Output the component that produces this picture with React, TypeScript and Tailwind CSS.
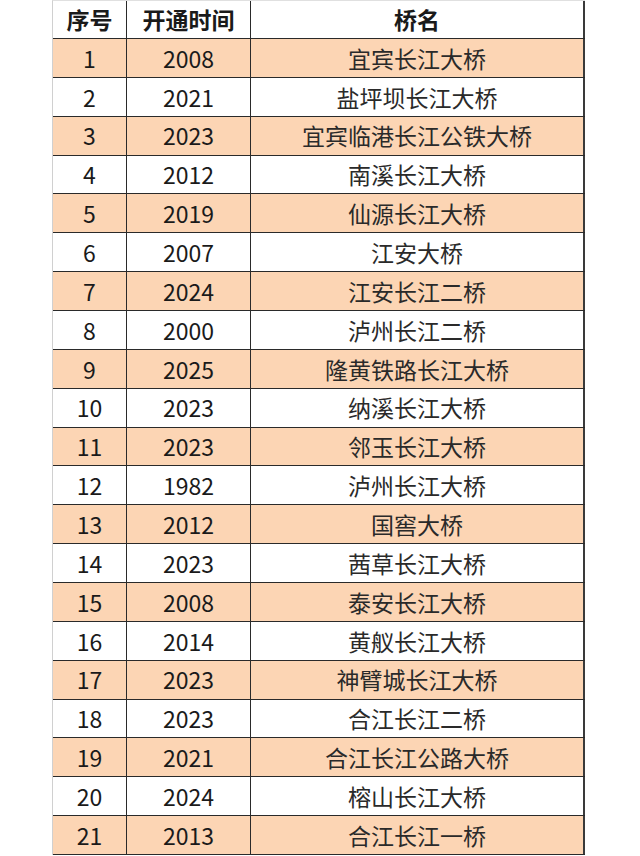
import React from "react";

const rows: [string, string, string][] = [
  ["1", "2008", "宜宾长江大桥"],
  ["2", "2021", "盐坪坝长江大桥"],
  ["3", "2023", "宜宾临港长江公铁大桥"],
  ["4", "2012", "南溪长江大桥"],
  ["5", "2019", "仙源长江大桥"],
  ["6", "2007", "江安大桥"],
  ["7", "2024", "江安长江二桥"],
  ["8", "2000", "泸州长江二桥"],
  ["9", "2025", "隆黄铁路长江大桥"],
  ["10", "2023", "纳溪长江大桥"],
  ["11", "2023", "邻玉长江大桥"],
  ["12", "1982", "泸州长江大桥"],
  ["13", "2012", "国窖大桥"],
  ["14", "2023", "茜草长江大桥"],
  ["15", "2008", "泰安长江大桥"],
  ["16", "2014", "黄舣长江大桥"],
  ["17", "2023", "神臂城长江大桥"],
  ["18", "2023", "合江长江二桥"],
  ["19", "2021", "合江长江公路大桥"],
  ["20", "2024", "榕山长江大桥"],
  ["21", "2013", "合江长江一桥"],
];

export default function App() {
  return (
    <div
      className="w-[640px] h-[856px] bg-white overflow-hidden"
      style={{ fontFamily: '"Noto Sans CJK SC", "Noto Sans", sans-serif' }}
    >
      <div className="ml-[52px] w-[533px] border-l border-l-[#d0d0d0] border-t border-t-[#e0e0e0] text-[#1a1a1a]">
        <div className="grid grid-cols-[74px_124px_1fr] h-[38px] border-b border-b-[#2a2a2a] bg-white text-[23px] font-bold">
          <div className="flex items-center justify-center border-r border-r-[#2a2a2a]">序号</div>
          <div className="flex items-center justify-center border-r border-r-[#2a2a2a]">开通时间</div>
          <div className="flex items-center justify-center border-r-2 border-r-[#3a3a3a]">桥名</div>
        </div>
        {rows.map(([n, y, name], i) => (
          <div
            key={n}
            className={
              "grid grid-cols-[74px_124px_1fr] h-[38.86px] border-b border-b-[#2a2a2a] text-[23px] " +
              (i % 2 === 0 ? "bg-[#fcd5b4]" : "bg-white")
            }
          >
            <div className="flex items-center justify-center border-r border-r-[#2a2a2a]">{n}</div>
            <div className="flex items-center justify-center border-r border-r-[#2a2a2a]">{y}</div>
            <div className="flex items-center justify-center border-r-2 border-r-[#3a3a3a] text-[#2a2a2a]">{name}</div>
          </div>
        ))}
      </div>
    </div>
  );
}
